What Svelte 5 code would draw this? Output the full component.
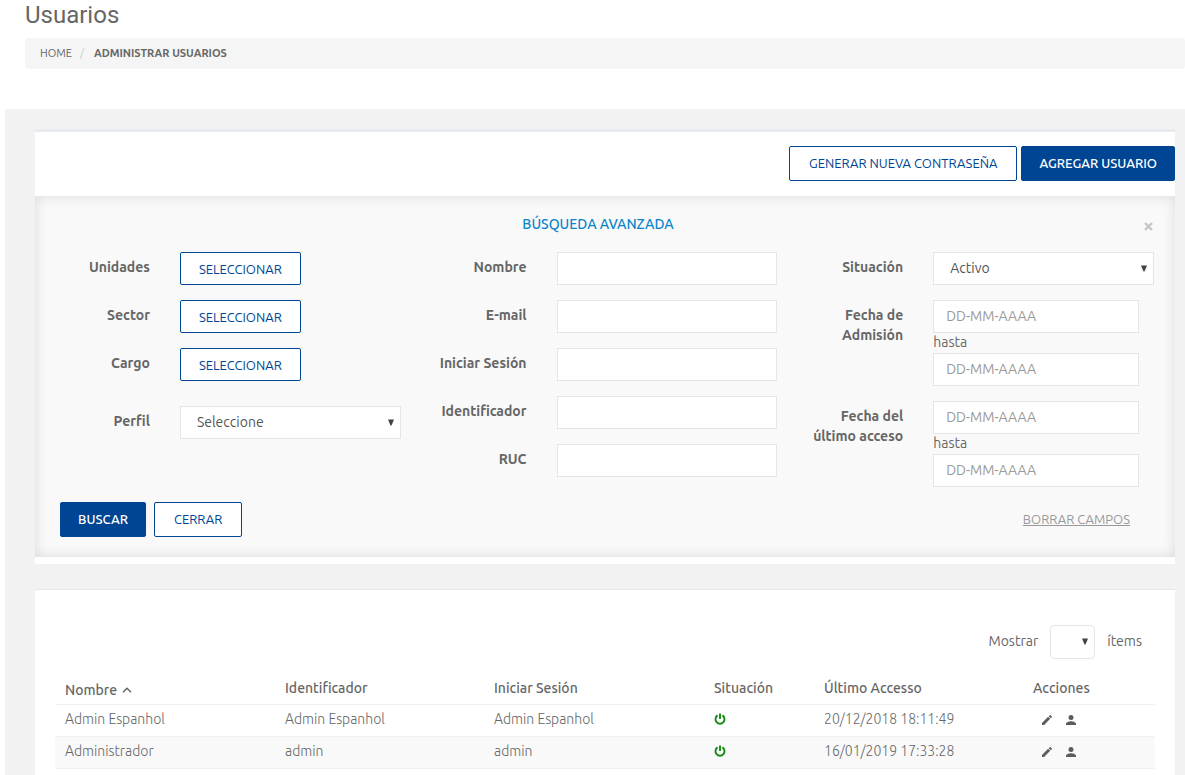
<script>
  const pickers = ['Unidades', 'Sector', 'Cargo'];
  const textFields = [
    { id: 'nombre', label: 'Nombre' },
    { id: 'email', label: 'E-mail' },
    { id: 'login', label: 'Iniciar Sesión' },
    { id: 'identificador', label: 'Identificador' },
    { id: 'ruc', label: 'RUC' }
  ];
  const ranges = [
    { id: 'admision', label: 'Fecha de Admisión' },
    { id: 'acceso', label: 'Fecha del último acceso' }
  ];
  const users = [
    { name: 'Admin Espanhol', ident: 'Admin Espanhol', login: 'Admin Espanhol', last: '20/12/2018 18:11:49' },
    { name: 'Administrador', ident: 'admin', login: 'admin', last: '16/01/2019 17:33:28' }
  ];
</script>

{#snippet arrow()}
  <svg class="arrow" viewBox="0 0 6 7" aria-hidden="true"><path d="M0 0.500H6L3.500 6.500H2.500Z" fill="#444" /></svg>
{/snippet}

<div class="page">
  <header>
    <h1>Usuarios</h1>
    <nav class="breadcrumb">
      <a href="#home">HOME</a>
      <span class="sep">/</span>
      <strong>ADMINISTRAR USUARIOS</strong>
    </nav>
  </header>

  <main>
    <section class="panel search">
      <div class="toolbar">
        <button class="btn" type="button">GENERAR NUEVA CONTRASEÑA</button>
        <button class="btn primary" type="button">AGREGAR USUARIO</button>
      </div>

      <form>
        <div class="form-head">
          <h2>BÚSQUEDA AVANZADA</h2>
          <button class="close" type="button" aria-label="Cerrar">
            <svg viewBox="0 0 9 9"><path d="M1 1L8 8M8 1L1 8" stroke="#c6c6c6" stroke-width="2.400" /></svg>
          </button>
        </div>

        <div class="columns">
          <div class="column">
            {#each pickers as label}
              <div class="field">
                <label for={label}>{label}</label>
                <div><button class="btn small" id={label} type="button">SELECCIONAR</button></div>
              </div>
            {/each}
            <div class="field spaced">
              <label for="perfil">Perfil</label>
              <div class="select">
                <select id="perfil"><option>Seleccione</option></select>
                {@render arrow()}
              </div>
            </div>
          </div>

          <div class="column">
            {#each textFields as f}
              <div class="field">
                <label for={f.id}>{f.label}</label>
                <div><input id={f.id} type="text" /></div>
              </div>
            {/each}
          </div>

          <div class="column">
            <div class="field">
              <label for="situacion">Situación</label>
              <div class="select">
                <select id="situacion"><option>Activo</option></select>
                {@render arrow()}
              </div>
            </div>
            {#each ranges as r}
              <div class="field">
                <label for={r.id}>{r.label}</label>
                <div class="range">
                  <input id={r.id} type="text" placeholder="DD-MM-AAAA" />
                  <label class="until" for="{r.id}-hasta">hasta</label>
                  <input id="{r.id}-hasta" type="text" placeholder="DD-MM-AAAA" />
                </div>
              </div>
            {/each}
          </div>
        </div>

        <div class="form-foot">
          <button class="btn primary" type="button">BUSCAR</button>
          <button class="btn" type="button">CERRAR</button>
          <a href="#borrar">BORRAR CAMPOS</a>
        </div>
      </form>
    </section>

    <section class="panel results">
      <div class="pager">
        <label for="items">Mostrar</label>
        <div class="select mini">
          <select id="items"><option></option></select>
          {@render arrow()}
        </div>
        <span>ítems</span>
      </div>

      <table>
        <thead>
          <tr>
            <th class="sorted">
              Nombre
              <svg viewBox="0 0 10 6" aria-hidden="true"><path d="M1 5.200L5 1.200L9 5.200" fill="none" stroke="#666" stroke-width="1.500" /></svg>
            </th>
            <th>Identificador</th>
            <th>Iniciar Sesión</th>
            <th>Situación</th>
            <th>Último Accesso</th>
            <th>Acciones</th>
          </tr>
        </thead>
        <tbody>
          {#each users as u}
            <tr>
              <td>{u.name}</td>
              <td>{u.ident}</td>
              <td>{u.login}</td>
              <td>
                <svg class="power" viewBox="0 0 12 12" role="img" aria-label="Activo">
                  <path d="M3.600 2.400A4.500 4.500 0 1 0 8.400 2.400M6 0.500V6" fill="none" stroke="#128a12" stroke-width="1.900" />
                </svg>
              </td>
              <td>{u.last}</td>
              <td>
                <div class="actions">
                  <button type="button" aria-label="Editar">
                    <svg viewBox="3 3 18 18"><path fill="#5c5c5c" d="M3 17.250V21h3.750L17.810 9.940l-3.750-3.750L3 17.250zM20.710 7.040a1 1 0 0 0 0-1.410l-2.340-2.340a1 1 0 0 0-1.410 0l-1.830 1.830 3.750 3.750 1.830-1.830z" /></svg>
                  </button>
                  <button type="button" aria-label="Perfil">
                    <svg viewBox="4 4 16 16"><path fill="#5c5c5c" d="M12 12a4 4 0 1 0 0-8 4 4 0 0 0 0 8zm0 2c-2.670 0-8 1.340-8 4v2h16v-2c0-2.660-5.330-4-8-4z" /></svg>
                  </button>
                </div>
              </td>
            </tr>
          {/each}
        </tbody>
      </table>
    </section>
  </main>
</div>

<style>
  :global(body) {
    margin: 0;
    background: #fff;
  }
  * {
    box-sizing: border-box;
  }
  .page {
    display: flex;
    flex-direction: column;
    min-height: 100vh;
    padding-left: 5px;
    color: #666;
    font: 14px/20px Ubuntu, 'Noto Sans', sans-serif;
  }
  header {
    padding: 0 0 40px 20px;
  }
  h1 {
    margin: 0;
    padding-bottom: 8px;
    font: 400 24px/30px Roboto, sans-serif;
  }
  .breadcrumb {
    display: flex;
    align-items: center;
    height: 31px;
    padding: 0 15px 2px;
    border-radius: 4px;
    background: #f5f5f5;
    font-size: 11px;
  }
  .breadcrumb a {
    color: inherit;
    text-decoration: none;
  }
  .sep {
    padding: 0 10px 0 8px;
    color: #ccc;
  }
  main {
    flex: 1;
    display: flex;
    flex-direction: column;
    gap: 25px;
    padding: 20px 10px 0 30px;
    background: #f2f2f2;
  }
  .panel {
    background: #fff;
  }
  .search {
    padding-bottom: 7px;
    border-top: 3px solid #e7ebef;
  }
  .toolbar {
    display: flex;
    justify-content: flex-end;
    gap: 4px;
    padding: 14px 0 15px;
  }
  button {
    cursor: pointer;
    font-family: inherit;
  }
  .btn {
    height: 35px;
    padding: 0 19px 2px;
    border: 1px solid #004494;
    border-radius: 2px;
    background: #fff;
    color: #004494;
    font-size: 13px;
    white-space: nowrap;
  }
  .btn.small {
    display: block;
    height: 33px;
    padding: 0 18px;
  }
  .btn.primary {
    padding: 0 17px 2px;
    background: #004494;
    color: #fff;
    font-weight: 500;
  }
  form {
    padding: 18px 6px 20px 4px;
    background: #f9f9f9;
    box-shadow: inset 0 0 14px rgba(0, 0, 0, 0.12);
  }
  .form-head {
    display: grid;
    grid-template-columns: 1fr auto 1fr;
    align-items: center;
    padding: 0 16px 18px;
  }
  h2 {
    grid-column: 2;
    margin: 0;
    padding-right: 12px;
    color: #0a86c9;
    font-size: 14px;
    font-weight: 500;
    line-height: 20px;
  }
  .close {
    justify-self: end;
    display: flex;
    padding: 5px 0 0;
    border: 0;
    background: none;
  }
  .close svg {
    width: 9px;
    height: 9px;
  }
  .columns {
    display: grid;
    grid-template-columns: repeat(3, 1fr);
  }
  .field {
    display: grid;
    grid-template-columns: minmax(0, 96fr) minmax(0, 221fr);
    gap: 30px;
    padding: 0 15px 15px;
  }
  .field.spaced {
    padding-top: 10px;
  }
  .field > label {
    padding-top: 5px;
    text-align: right;
    font-weight: 700;
  }
  input,
  select {
    display: block;
    width: 100%;
    height: 33px;
    border: 1px solid #e5e5e5;
    border-radius: 0;
    background: #fff;
    color: #555;
    font: inherit;
  }
  input {
    padding: 0 12px 2px;
  }
  input::placeholder {
    color: #999;
    opacity: 1;
  }
  select {
    appearance: none;
    padding: 0 24px 2px 16px;
  }
  .select {
    position: relative;
  }
  .arrow {
    position: absolute;
    top: 13px;
    right: 7px;
    width: 6px;
    height: 7px;
    pointer-events: none;
  }
  .range {
    padding-right: 15px;
  }
  .until {
    display: block;
    height: 20px;
    line-height: 18px;
  }
  .form-foot {
    display: flex;
    align-items: center;
    gap: 8px;
    padding: 0 39px 0 21px;
  }
  .form-foot a {
    margin-left: auto;
    padding-bottom: 2px;
    color: #999;
    font-size: 13px;
  }
  .results {
    flex: 1;
    padding: 35px 20px 0;
    border-top: 1px solid #e7e7e7;
  }
  .pager {
    display: flex;
    justify-content: flex-end;
    gap: 12px;
    padding: 0 13px 14px;
    line-height: 32px;
  }
  .mini {
    width: 45px;
  }
  .mini select {
    height: 34px;
    border-radius: 4px;
  }
  table {
    width: 100%;
    table-layout: fixed;
    border-collapse: collapse;
  }
  th,
  td {
    height: 32px;
    padding: 0 0 2px 10px;
    border-bottom: 1px solid #f0f0f0;
    text-align: left;
  }
  th {
    width: 19%;
    height: 31px;
    padding-bottom: 0;
    font-weight: 500;
  }
  th:nth-child(1),
  th:nth-child(3) {
    width: 20%;
  }
  th:nth-child(4) {
    width: 10%;
  }
  th:nth-child(6) {
    width: 12%;
  }
  th.sorted {
    padding-top: 4px;
  }
  th svg {
    width: 10px;
    height: 6px;
    margin-left: 2px;
    vertical-align: 2px;
  }
  td {
    font-weight: 300;
  }
  tbody tr:nth-child(even) {
    background: #f9f9f9;
  }
  .power {
    display: block;
    width: 12px;
    height: 12px;
  }
  .actions {
    display: flex;
    gap: 14px;
    padding: 2px 0 0 9px;
  }
  .actions button {
    display: flex;
    padding: 0;
    border: 0;
    background: none;
  }
  .actions svg {
    width: 10px;
    height: 10px;
  }
</style>
